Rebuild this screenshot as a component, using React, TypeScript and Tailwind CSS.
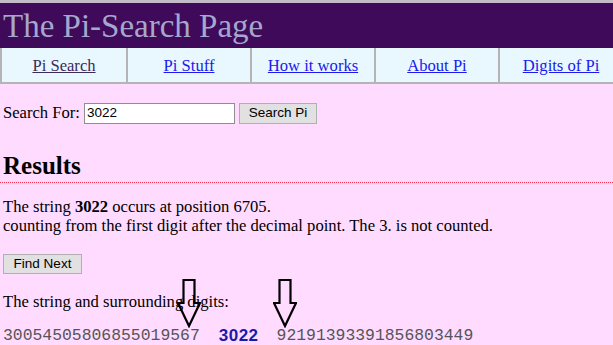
import React from 'react';

const navLinks = ['Pi Search', 'Pi Stuff', 'How it works', 'About Pi', 'Digits of Pi'];

const DownArrow: React.FC<{ className: string }> = ({ className }) => (
  <svg className={className} width="24" height="49" viewBox="0 0 24 49">
    <path
      d="M6.5 1 H17.5 V24 H23 L12 47 L1 24 H6.5 Z"
      fill="none"
      stroke="#000"
      strokeWidth="2.2"
      strokeLinejoin="miter"
    />
  </svg>
);

export default function App() {
  return (
    <div className="min-h-screen w-[613px] overflow-hidden bg-[#ffdcff] font-['Liberation_Serif',serif] text-[16.6px] text-black">
      {/* Title bar */}
      <div className="border-t-[3px] border-[#c4bcc8] bg-[#400a5a] h-[48px] pl-[3px] pt-[2px]">
        <div className="text-[33px] leading-[43px] text-[#a4a8cc]">The Pi-Search Page</div>
      </div>

      {/* Nav */}
      <div className="flex w-[640px] border-b-2 border-[#b4b4b4] bg-[#e9f8ff] h-[36px]">
        {navLinks.map((label, i) => (
          <div
            key={label}
            className={`flex items-center justify-center pt-[3px] border-l-2 border-[#b4b4b4] ${i === 0 ? 'w-[126px]' : 'w-[124px]'}`}
          >
            <span className={`underline ${i === 0 ? 'text-[#3c2a5a]' : 'text-[#1a1aee]'}`}>{label}</span>
          </div>
        ))}
      </div>

      {/* Search form */}
      <div className="flex items-center pl-[3px] mt-[18px] h-[22px]">
        <span>Search For:</span>
        <div className="ml-[4px] w-[151px] h-[21px] border border-[#8f8f8f] bg-white flex items-center px-[2px] font-['Liberation_Sans',sans-serif] text-[13.5px]">
          3022
        </div>
        <div className="ml-[4px] w-[78px] h-[21px] border border-[#b0b0b0] bg-[#e1e1e1] flex items-center justify-center font-['Liberation_Sans',sans-serif] text-[13.5px]">
          Search Pi
        </div>
      </div>

      {/* Results */}
      <div className="mt-[28px] pl-[3px] font-bold text-[25px] leading-[28px]">Results</div>
      <div className="mt-[2px] h-px bg-[repeating-linear-gradient(90deg,#ff3050_0_1px,transparent_1px_2px)]" />

      <div className="mt-[14px] pl-[3px] leading-[19px]">
        <div>
          The string <b>3022</b> occurs at position 6705.
        </div>
        <div>counting from the first digit after the decimal point. The 3. is not counted.</div>
      </div>

      <div className="mt-[19px] ml-[3px] w-[79px] h-[20px] border border-[#b0b0b0] bg-[#e1e1e1] flex items-center justify-center font-['Liberation_Sans',sans-serif] text-[13.5px]">
        Find Next
      </div>

      <div className="relative">
        <div className="mt-[18px] pl-[3px] leading-[19px]">The string and surrounding digits:</div>
        <div className="mt-[15px] pl-[3px] leading-[19px] flex items-center whitespace-pre">
          <span className="font-['Liberation_Mono',monospace] text-[16.4px] text-[#555]">30054505806855019567</span>
          <span className="ml-[19px] font-['Liberation_Sans',sans-serif] font-bold text-[17px] tracking-[0.5px] text-[#1a1aa8]">3022</span>
          <span className="ml-[18px] font-['Liberation_Mono',monospace] text-[16.4px] text-[#555]">92191393391856803449</span>
        </div>
        <DownArrow className="absolute left-[177px] top-[-13px]" />
        <DownArrow className="absolute left-[273px] top-[-13px]" />
      </div>
    </div>
  );
}
